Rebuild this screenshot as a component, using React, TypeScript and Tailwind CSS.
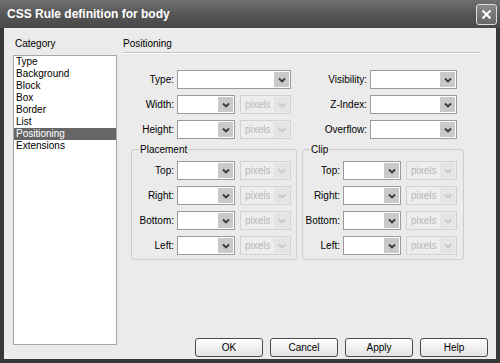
import React from "react";

const Chevron = ({ color }: { color: string }) => (
  <svg width="8" height="6" viewBox="0 0 8 6">
    <polyline points="1,1.5 4,4.5 7,1.5" fill="none" stroke={color} strokeWidth="1.8" />
  </svg>
);

const Select = ({ w, disabled, text }: { w: string; disabled?: boolean; text?: string }) => (
  <div
    className={`${w} h-[19px] flex items-stretch border ${
      disabled ? "border-[#d2d2d2] bg-[#ededed]" : "border-[#9a9a9a] bg-white"
    }`}
  >
    <div className={`flex-1 pl-[4px] flex items-center ${disabled ? "text-[#b8b8b8]" : "text-black"}`}>
      {text}
    </div>
    <div
      className={`w-[15px] m-[1px] flex items-center justify-center ${
        disabled ? "bg-[#e4e4e4]" : "bg-[#c9c9c9]"
      }`}
    >
      <Chevron color={disabled ? "#c8c8c8" : "#3a3a3a"} />
    </div>
  </div>
);

const Row = ({ label, lw, children }: { label: string; lw: string; children: React.ReactNode }) => (
  <div className="flex items-center h-[19px]">
    <div className={`${lw} text-right pr-[3px] shrink-0`}>{label}</div>
    {children}
  </div>
);

const Group = ({ title, children, cls }: { title: string; children: React.ReactNode; cls: string }) => (
  <div className={`relative border border-[#cdcdcd] rounded-[3px] pt-[11px] pb-[4px] flex flex-col gap-[6px] ${cls}`}>
    <div className="absolute -top-[7px] left-[7px] px-[1px] bg-[#ebebeb] leading-[13px]">{title}</div>
    {children}
  </div>
);

const Button = ({ label }: { label: string }) => (
  <div className="w-[68px] h-[19px] rounded-[3px] border border-[#4a4a4a] bg-gradient-to-b from-white to-[#e2e2e2] flex items-center justify-center">
    {label}
  </div>
);

export default function App() {
  const items = ["Type", "Background", "Block", "Box", "Border", "List", "Positioning", "Extensions"];
  return (
    <div
      className="w-[500px] h-[363px] bg-[#383838] flex flex-col text-[10px] text-black"
      style={{ fontFamily: '"Liberation Sans", Arial, sans-serif' }}
    >
      {/* title bar */}
      <div className="h-[28px] shrink-0 bg-gradient-to-b from-[#707070] via-[#565656] to-[#484848] flex items-center justify-between pl-[7px] pr-[3px]">
        <div className="text-white font-bold text-[12px]">CSS Rule definition for body</div>
        <div className="w-[21px] h-[21px] rounded-[3px] border border-[#dcdcdc] bg-gradient-to-b from-[#8a8a8a] to-[#666] flex items-center justify-center">
          <svg width="11" height="11" viewBox="0 0 11 11">
            <path d="M1.5 1.5 L9.5 9.5 M9.5 1.5 L1.5 9.5" stroke="white" strokeWidth="2" />
          </svg>
        </div>
      </div>

      {/* content */}
      <div className="flex-1 mx-[4px] mb-[4px] bg-[#ebebeb] flex pt-[9px] pl-[9px]">
        {/* category column */}
        <div className="w-[104px] flex flex-col">
          <div className="leading-[13px] pl-[2px]">Category</div>
          <div className="mt-[5px] h-[290px] bg-white border border-[#a8a8a8]">
            {items.map((it) => (
              <div
                key={it}
                className={`h-[12px] leading-[12px] pl-[2px] ${it === "Positioning" ? "bg-[#666] text-white" : ""}`}
              >
                {it}
              </div>
            ))}
          </div>
        </div>

        {/* positioning panel */}
        <div className="ml-[6px] flex flex-col w-[365px]">
          <div className="leading-[13px]">Positioning</div>
          <div className="mt-[2px] w-[357px] h-[2px] border-t border-[#c4c4c4] bg-white" />

          <div className="mt-[16px] flex">
            <div className="w-[168px] flex flex-col gap-[6px]">
              <Row label="Type:" lw="w-[54px]">
                <Select w="w-[114px]" />
              </Row>
              <Row label="Width:" lw="w-[54px]">
                <Select w="w-[58px]" />
                <div className="w-[5px]" />
                <Select w="w-[51px]" disabled text="pixels" />
              </Row>
              <Row label="Height:" lw="w-[54px]">
                <Select w="w-[58px]" />
                <div className="w-[5px]" />
                <Select w="w-[51px]" disabled text="pixels" />
              </Row>
            </div>
            <div className="flex flex-col gap-[6px]">
              <Row label="Visibility:" lw="w-[79px]">
                <Select w="w-[87px]" />
              </Row>
              <Row label="Z-Index:" lw="w-[79px]">
                <Select w="w-[87px]" />
              </Row>
              <Row label="Overflow:" lw="w-[79px]">
                <Select w="w-[87px]" />
              </Row>
            </div>
          </div>

          <div className="mt-[10px] flex ml-[8px] gap-[5px]">
            <Group title="Placement" cls="w-[166px]">
              {["Top:", "Right:", "Bottom:", "Left:"].map((l) => (
                <Row key={l} label={l} lw="w-[45px]">
                  <Select w="w-[58px]" />
                  <div className="w-[5px]" />
                  <Select w="w-[51px]" disabled text="pixels" />
                </Row>
              ))}
            </Group>
            <Group title="Clip" cls="w-[162px]">
              {["Top:", "Right:", "Bottom:", "Left:"].map((l) => (
                <Row key={l} label={l} lw="w-[40px]">
                  <Select w="w-[58px]" />
                  <div className="w-[5px]" />
                  <Select w="w-[51px]" disabled text="pixels" />
                </Row>
              ))}
            </Group>
          </div>

          <div className="mt-auto mb-[2px] flex justify-end gap-[7px]">
            <Button label="OK" />
            <Button label="Cancel" />
            <Button label="Apply" />
            <Button label="Help" />
          </div>
        </div>
      </div>
    </div>
  );
}
